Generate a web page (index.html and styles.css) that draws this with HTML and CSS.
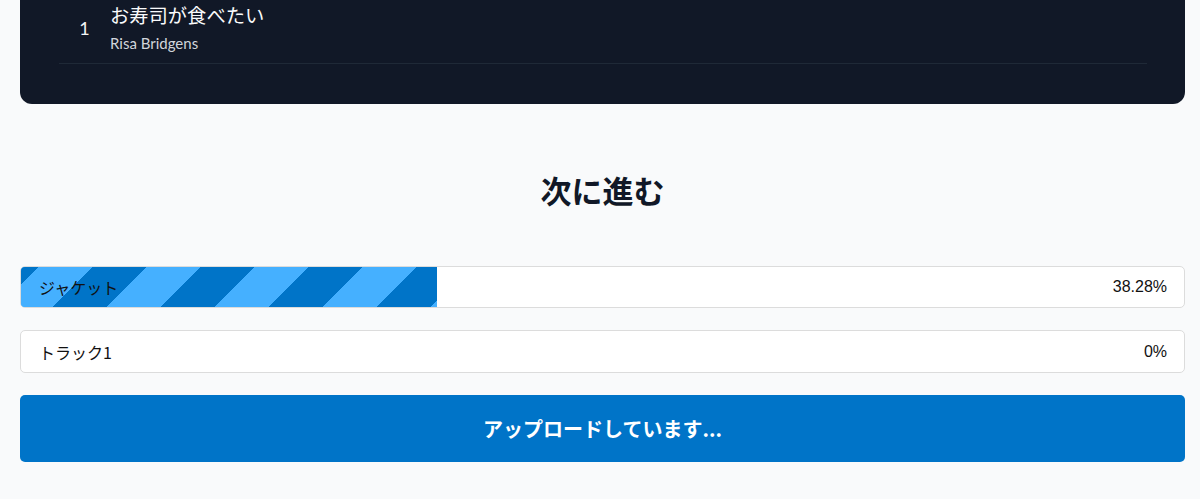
FILE: index.html
```html
<!DOCTYPE html>
<html lang="ja">
<head>
<meta charset="utf-8">
<title>アップロード</title>
<link rel="stylesheet" href="styles.css">
</head>
<body>
<div class="page">
  <section class="card">
    <div class="track">
      <div class="track-num">1</div>
      <div class="track-info">
        <div class="track-title">お寿司が食べたい</div>
        <div class="track-artist">Risa Bridgens</div>
      </div>
    </div>
  </section>

  <h2 class="heading">次に進む</h2>

  <div class="uploads">
    <div class="bar">
      <div class="bar-fill" style="width: 35.8%"></div>
      <span class="bar-label">ジャケット</span>
      <span class="bar-pct">38.28%</span>
    </div>
    <div class="bar">
      <div class="bar-fill" style="width: 0%"></div>
      <span class="bar-label">トラック1</span>
      <span class="bar-pct">0%</span>
    </div>
    <button class="submit" type="button">アップロードしています...</button>
  </div>
</div>
</body>
</html>
```

FILE: styles.css
```css
html, body {
  margin: 0;
  padding: 0;
  background: #f9fafb;
}

body {
  font-family: "Noto Sans CJK JP", "Noto Sans", sans-serif;
  color: #111827;
  overflow: hidden;
}

.page {
  padding: 0 15px 0 20px;
}

.card {
  background: #111827;
  border-radius: 0 0 12px 12px;
  padding: 0 38px 40px 39px;
}

.track {
  display: flex;
  align-items: center;
  padding-bottom: 10px;
  border-bottom: 1px solid #1f2937;
}

.track-num {
  width: 51px;
  text-align: center;
  font-family: Lato, "Noto Sans", sans-serif;
  font-size: 18px;
  color: #f3f4f6;
  padding-top: 2px;
}

.track-title {
  font-size: 19.3px;
  line-height: 30px;
  color: #f9fafb;
}

.track-artist {
  margin-top: 3px;
  font-family: Lato, "Noto Sans", sans-serif;
  font-size: 15px;
  line-height: 20px;
  color: #d1d5db;
}

.heading {
  margin: 68px 0 58px;
  text-align: center;
  font-size: 31px;
  line-height: 36px;
  font-weight: 700;
  color: #111827;
}

.uploads {
  display: flex;
  flex-direction: column;
  gap: 22px;
}

.bar {
  position: relative;
  display: flex;
  align-items: center;
  justify-content: space-between;
  height: 42px;
  box-sizing: border-box;
  background: #ffffff;
  border: 1px solid #dcdcdc;
  border-radius: 5px;
  overflow: hidden;
  padding: 0 17px 0 18px;
  font-size: 16px;
  color: #111111;
}

.bar + .bar {
  height: 43px;
}

.bar-fill {
  position: absolute;
  left: 0;
  top: 0;
  bottom: 0;
  background-color: #45b0ff;
  background-image: linear-gradient(135deg,
    #45b0ff 25%, #0074c8 25%, #0074c8 50%,
    #45b0ff 50%, #45b0ff 75%, #0074c8 75%);
  background-size: 108px 108px;
  background-position: 18px 0;
}

.bar-label {
  position: relative;
  font-family: "Noto Sans CJK JP", sans-serif;
}

.bar-pct {
  position: relative;
  font-family: "Liberation Sans", Arial, sans-serif;
}

.submit {
  height: 67px;
  border: 0;
  border-radius: 5px;
  background: #0074c8;
  color: #ffffff;
  font-family: "Noto Sans CJK JP", sans-serif;
  font-size: 20px;
  font-weight: 700;
  cursor: pointer;
}
```
